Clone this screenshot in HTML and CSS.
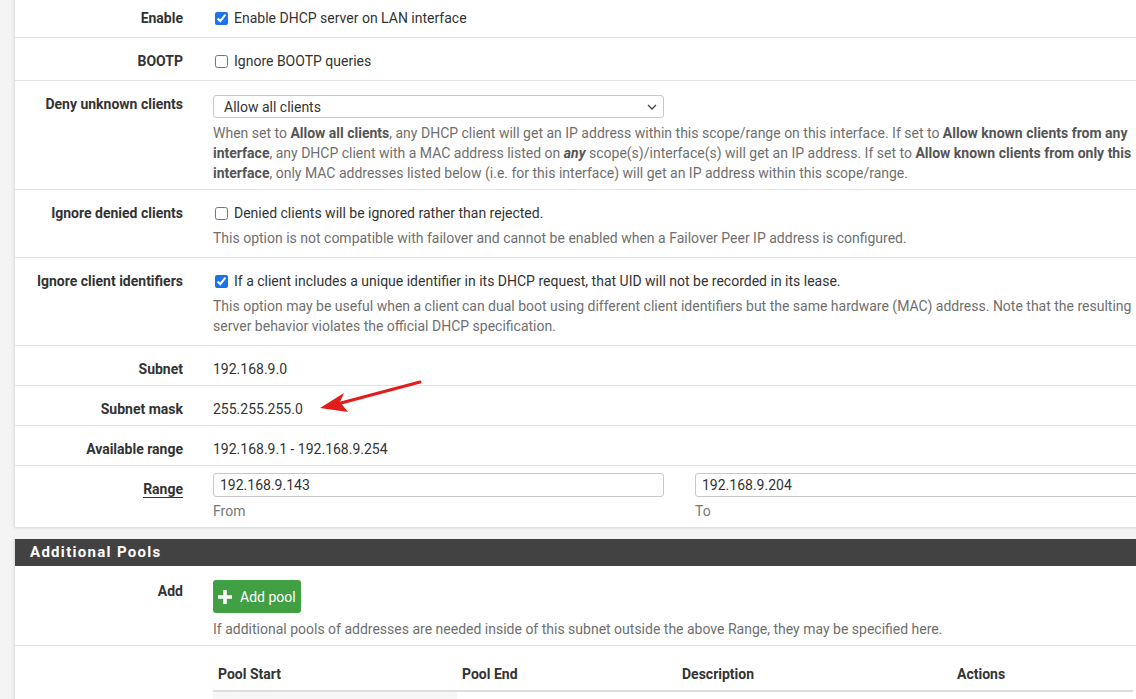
FILE: index.html
```html
<!DOCTYPE html>
<html>
<head>
    <meta charset="UTF-8">
    <title>DHCP Server</title>
    <link rel="stylesheet" href="styles.css">
</head>
<body>
    <div class="page">
        <!-- General options -->
        <div class="panel">
            <div class="form-row first">
                <div class="form-label">Enable</div>
                <div class="field check-field">
                    <label class="check"><input type="checkbox" checked> Enable DHCP server on LAN interface</label>
                </div>
            </div>
            <div class="form-row">
                <div class="form-label">BOOTP</div>
                <div class="field check-field">
                    <label class="check"><input type="checkbox"> Ignore BOOTP queries</label>
                </div>
            </div>
            <div class="form-row">
                <div class="form-label">Deny unknown clients</div>
                <div class="field select-field">
                    <div class="select">
                        <span>Allow all clients</span>
                        <svg width="10" height="6" viewBox="0 0 10 6"><path d="M1 1 L5 5 L9 1" fill="none" stroke="#444" stroke-width="1.3"/></svg>
                    </div>
                    <div class="help">When set to <b>Allow all clients</b>, any DHCP client will get an IP address within this scope/range on this interface. If set to <b>Allow known clients from any interface</b>, any DHCP client with a MAC address listed on <b><i>any</i></b> scope(s)/interface(s) will get an IP address. If set to <b>Allow known clients from only this interface</b>, only MAC addresses listed below (i.e. for this interface) will get an IP address within this scope/range.</div>
                </div>
            </div>
            <div class="form-row">
                <div class="form-label">Ignore denied clients</div>
                <div class="field check-field">
                    <label class="check"><input type="checkbox"> Denied clients will be ignored rather than rejected.</label>
                    <div class="help">This option is not compatible with failover and cannot be enabled when a Failover Peer IP address is configured.</div>
                </div>
            </div>
            <div class="form-row">
                <div class="form-label">Ignore client identifiers</div>
                <div class="field check-field">
                    <label class="check"><input type="checkbox" checked> If a client includes a unique identifier in its DHCP request, that UID will not be recorded in its lease.</label>
                    <div class="help">This option may be useful when a client can dual boot using different client identifiers but the same hardware (MAC) address. Note that the resulting server behavior violates the official DHCP specification.</div>
                </div>
            </div>
            <div class="form-row">
                <div class="form-label">Subnet</div>
                <div class="field static-field">192.168.9.0</div>
            </div>
            <div class="form-row">
                <div class="form-label">Subnet mask</div>
                <div class="field static-field">255.255.255.0</div>
            </div>
            <div class="form-row">
                <div class="form-label">Available range</div>
                <div class="field static-field">192.168.9.1 - 192.168.9.254</div>
            </div>
            <div class="form-row last">
                <div class="form-label"><span class="underlined">Range</span></div>
                <div class="field range-field">
                    <div class="range-col">
                        <div class="text-input">192.168.9.143</div>
                        <div class="sub-help">From</div>
                    </div>
                    <div class="range-col">
                        <div class="text-input">192.168.9.204</div>
                        <div class="sub-help">To</div>
                    </div>
                </div>
            </div>
        </div>

        <!-- Additional pools -->
        <div class="panel pools">
            <div class="panel-heading">Additional Pools</div>
            <div class="form-row">
                <div class="form-label add-label">Add</div>
                <div class="field add-field">
                    <button class="btn-success">
                        <svg width="16" height="16" viewBox="0 0 16 16"><path d="M8 1 V15 M1 8 H15" stroke="#fff" stroke-width="3.6"/></svg>
                        Add pool
                    </button>
                    <div class="help">If additional pools of addresses are needed inside of this subnet outside the above Range, they may be specified here.</div>
                </div>
            </div>
            <div class="form-row">
                <div class="form-label"></div>
                <div class="field table-field">
                    <table class="pool-table">
                        <thead>
                            <tr>
                                <th class="c1">Pool Start</th>
                                <th class="c2">Pool End</th>
                                <th class="c3">Description</th>
                                <th>Actions</th>
                            </tr>
                        </thead>
                        <tbody>
                            <tr><td class="stripe"></td><td></td><td></td><td></td></tr>
                        </tbody>
                    </table>
                </div>
            </div>
        </div>

        <!-- annotation arrow -->
        <svg class="arrow" width="110" height="40" viewBox="0 0 110 40">
            <path d="M107 3 L28 24" stroke="#e21b1b" stroke-width="3" stroke-linecap="round"/>
            <path d="M7 29 L31 14 L27 23 L35 33 Z" fill="#e21b1b"/>
        </svg>
    </div>
</body>
</html>
```

FILE: styles.css
```css
body {
    font-family: Roboto, "Liberation Sans", sans-serif;
    font-size: 14px;
    line-height: 20px;
    color: #333;
    margin: 0;
    background-color: #f4f4f4;
    overflow: hidden;
}

.page {
    position: relative;
    padding-left: 14px;
    margin-top: -5px;
}

.panel {
    width: 1160px;
    background-color: #fff;
    border-left: 1px solid #e2e2e2;
    box-shadow: 0 1px 3px rgba(0,0,0,0.12);
}

.panel.pools {
    margin-top: 12px;
}

.panel-heading {
    background-color: #424242;
    color: #fff;
    font-size: 15px;
    font-weight: bold;
    letter-spacing: 1.3px;
    line-height: 27px;
    padding-left: 15px;
}

/* Form rows */
.form-row {
    display: grid;
    grid-template-columns: 168px 920px;
    column-gap: 30px;
    padding: 6px 0;
    border-bottom: 1px solid #e4e4e4;
}

.form-row.last {
    border-bottom: none;
}

.form-label {
    text-align: right;
    font-weight: bold;
    padding-top: 7px;
}

.form-label.add-label {
    padding-top: 9px;
}

.underlined {
    border-bottom: 1px solid #333;
}

.check-field {
    padding: 7px 0 3px;
}

.check {
    display: flex;
    align-items: center;
    gap: 6px;
}

.check input {
    margin: 0 0 0 2px;
    width: 13px;
    height: 13px;
    accent-color: #1a73e8;
}

.help {
    color: #6f6f6f;
    margin-top: 5px;
}

.help b {
    color: #555;
}

.select-field {
    padding-top: 8px;
}

.select {
    width: 451px;
    height: 23px;
    box-sizing: border-box;
    border: 1px solid #c8c8c8;
    border-radius: 3px;
    display: flex;
    align-items: center;
    justify-content: space-between;
    padding: 0 6px 0 10px;
}

.static-field {
    padding-top: 7px;
}

.range-field {
    display: grid;
    grid-template-columns: 451px 451px;
    column-gap: 31px;
    padding-top: 1px;
}

.text-input {
    height: 24px;
    box-sizing: border-box;
    border: 1px solid #c8c8c8;
    border-radius: 3px;
    padding: 1px 6px;
    line-height: 20px;
}

.sub-help {
    color: #777;
    margin-top: 4px;
}

.add-field {
    padding-top: 8px;
}

.btn-success {
    display: flex;
    align-items: center;
    gap: 7px;
    height: 33px;
    padding: 0 5px 0 4px;
    background-color: #41a043;
    color: #fff;
    border: none;
    border-radius: 3px;
    font-family: inherit;
    font-size: 14px;
}

.add-field .help {
    margin-top: 6px;
}

.table-field {
    padding-top: 6px;
}

.pool-table {
    width: 920px;
    border-collapse: collapse;
}

.pool-table th {
    text-align: left;
    padding: 6px 5px;
    border-bottom: 2px solid #ddd;
}

.pool-table .c1 { width: 234px; }
.pool-table .c2 { width: 210px; }
.pool-table .c3 { width: 265px; }

.pool-table td {
    height: 20px;
}

.pool-table td.stripe {
    background-color: #f7f7f7;
}

.arrow {
    position: absolute;
    left: 313px;
    top: 384px;
}
```
